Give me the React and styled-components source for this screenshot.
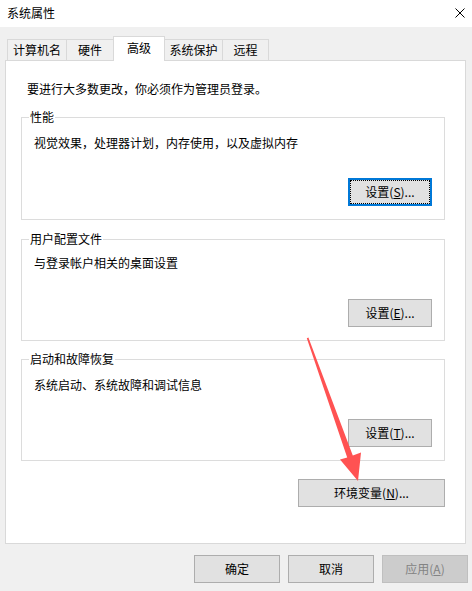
import React from "react";
import styled, { createGlobalStyle } from "styled-components";

const Global = createGlobalStyle`
  html, body { margin: 0; padding: 0; background: #f0f0f0; }
  body { font-family: "Noto Sans CJK SC", "Microsoft YaHei", sans-serif; font-size: 12px; color: #000; }
  * { box-sizing: border-box; }
`;

const Window = styled.div`
  position: relative;
  width: 472px;
  height: 591px;
  background: #f0f0f0;
  display: flex;
  flex-direction: column;
  overflow: hidden;
`;

const TitleBar = styled.div`
  height: 27px;
  flex: none;
  background: #fff;
  display: flex;
  align-items: center;
  justify-content: space-between;
  padding: 0 7px 1px 7px;
  font-size: 12px;
  line-height: 16px;
`;

const CloseIcon = styled.svg`
  width: 10px;
  height: 10px;
  margin-right: 0px;
`;

const Body = styled.div`
  flex: 1;
  display: flex;
  flex-direction: column;
  padding: 9px 6px 0 5px;
`;

const TabStrip = styled.div`
  height: 24px;
  flex: none;
  display: flex;
  align-items: flex-end;
  padding-left: 2px;
`;

const Tab = styled.div`
  width: ${(p) => p.$w}px;
  height: ${(p) => (p.$active ? 25 : 21)}px;
  margin-right: -1px;
  margin-bottom: ${(p) => (p.$active ? -1 : 0)}px;
  background: ${(p) => (p.$active ? "#fff" : "#f0f0f0")};
  border: 1px solid #d9d9d9;
  border-bottom: none;
  display: flex;
  align-items: center;
  justify-content: center;
  padding-bottom: ${(p) => (p.$active ? 3 : 0)}px;
  line-height: 16px;
  position: relative;
  z-index: ${(p) => (p.$active ? 2 : 1)};
`;

const Panel = styled.div`
  flex: 1;
  background: #fff;
  border: 1px solid #d9d9d9;
  padding: 20px 20px 0 15px;
  display: flex;
  flex-direction: column;
`;

const Notice = styled.div`
  line-height: 16px;
  margin-left: 6px;
  margin-bottom: 12px;
`;

const Group = styled.fieldset`
  margin: 0 0 ${(p) => p.$mb || 0}px 0;
  padding: 0;
  border: 1px solid #dcdcdc;
  min-width: 0;
`;

const Legend = styled.legend`
  margin-left: 7px;
  padding: 0 1px;
  line-height: 16px;
  font-size: 12px;
`;

const GroupBody = styled.div`
  padding: ${(p) => p.$pt}px 12px 13px 12px;
  display: flex;
  flex-direction: column;
`;

const Desc = styled.div`
  line-height: 16px;
`;

const ButtonRow = styled.div`
  display: flex;
  justify-content: flex-end;
  gap: ${(p) => p.$gap || 0}px;
  margin-top: ${(p) => p.$mt || 0}px;
`;

const Button = styled.button`
  width: ${(p) => p.$w}px;
  height: 28px;
  font-family: inherit;
  font-size: 12px;
  line-height: 16px;
  color: ${(p) => (p.disabled ? "#838383" : "#000")};
  background: ${(p) => (p.disabled ? "#cccccc" : "#e1e1e1")};
  border: ${(p) => (p.$focus ? "2px solid #0078d7" : p.disabled ? "1px solid #bfbfbf" : "1px solid #adadad")};
  border-radius: 0;
  padding: 0;
  outline: ${(p) => (p.$focus ? "1px dotted #000" : "none")};
  outline-offset: -3px;
  display: flex;
  align-items: center;
  justify-content: center;
  u { text-decoration: underline; text-underline-offset: 1px; }
`;

const Footer = styled.div`
  flex: none;
  height: 47px;
  padding: 11px 4px 8px 0;
  display: flex;
  justify-content: flex-end;
  gap: 8px;
`;

const ArrowSvg = styled.svg`
  position: absolute;
  left: 0;
  top: 0;
  pointer-events: none;
  z-index: 10;
`;

export default function App() {
  return (
    <>
      <Global />
      <Window>
        <TitleBar>
          <span>系统属性</span>
          <CloseIcon viewBox="0 0 10 10">
            <path d="M0.5 0.5 L9.5 9.5 M9.5 0.5 L0.5 9.5" stroke="#000" strokeWidth="1" fill="none" />
          </CloseIcon>
        </TitleBar>
        <Body>
          <TabStrip>
            <Tab $w={60}>计算机名</Tab>
            <Tab $w={48}>硬件</Tab>
            <Tab $w={52} $active>高级</Tab>
            <Tab $w={59}>系统保护</Tab>
            <Tab $w={47}>远程</Tab>
          </TabStrip>
          <Panel>
            <Notice>要进行大多数更改，你必须作为管理员登录。</Notice>
            <Group $mb={11}>
              <Legend>性能</Legend>
              <GroupBody $pt={10}>
                <Desc>视觉效果，处理器计划，内存使用，以及虚拟内存</Desc>
                <ButtonRow $mt={27}>
                  <Button $w={84} $focus>
                    设置(<u>S</u>)...
                  </Button>
                </ButtonRow>
              </GroupBody>
            </Group>
            <Group $mb={10}>
              <Legend>用户配置文件</Legend>
              <GroupBody $pt={8}>
                <Desc>与登录帐户相关的桌面设置</Desc>
                <ButtonRow $mt={28}>
                  <Button $w={84}>
                    设置(<u>E</u>)...
                  </Button>
                </ButtonRow>
              </GroupBody>
            </Group>
            <Group>
              <Legend>启动和故障恢复</Legend>
              <GroupBody $pt={10}>
                <Desc>系统启动、系统故障和调试信息</Desc>
                <ButtonRow $mt={26}>
                  <Button $w={84}>
                    设置(<u>T</u>)...
                  </Button>
                </ButtonRow>
              </GroupBody>
            </Group>
            <ButtonRow $mt={18}>
              <Button $w={147}>
                环境变量(<u>N</u>)...
              </Button>
            </ButtonRow>
          </Panel>
        </Body>
        <Footer>
          <Button $w={86}>确定</Button>
          <Button $w={86}>取消</Button>
          <Button $w={86} disabled>
            应用(<u>A</u>)
          </Button>
        </Footer>
        <ArrowSvg width="472" height="591" viewBox="0 0 472 591">
          <polygon
            points="306.8,338.2 308.4,337.6 352.8,455.5 361,452.5 358,481 340,459.5 347.2,457.5"
            fill="#ff5252"
          />
        </ArrowSvg>
      </Window>
    </>
  );
}
